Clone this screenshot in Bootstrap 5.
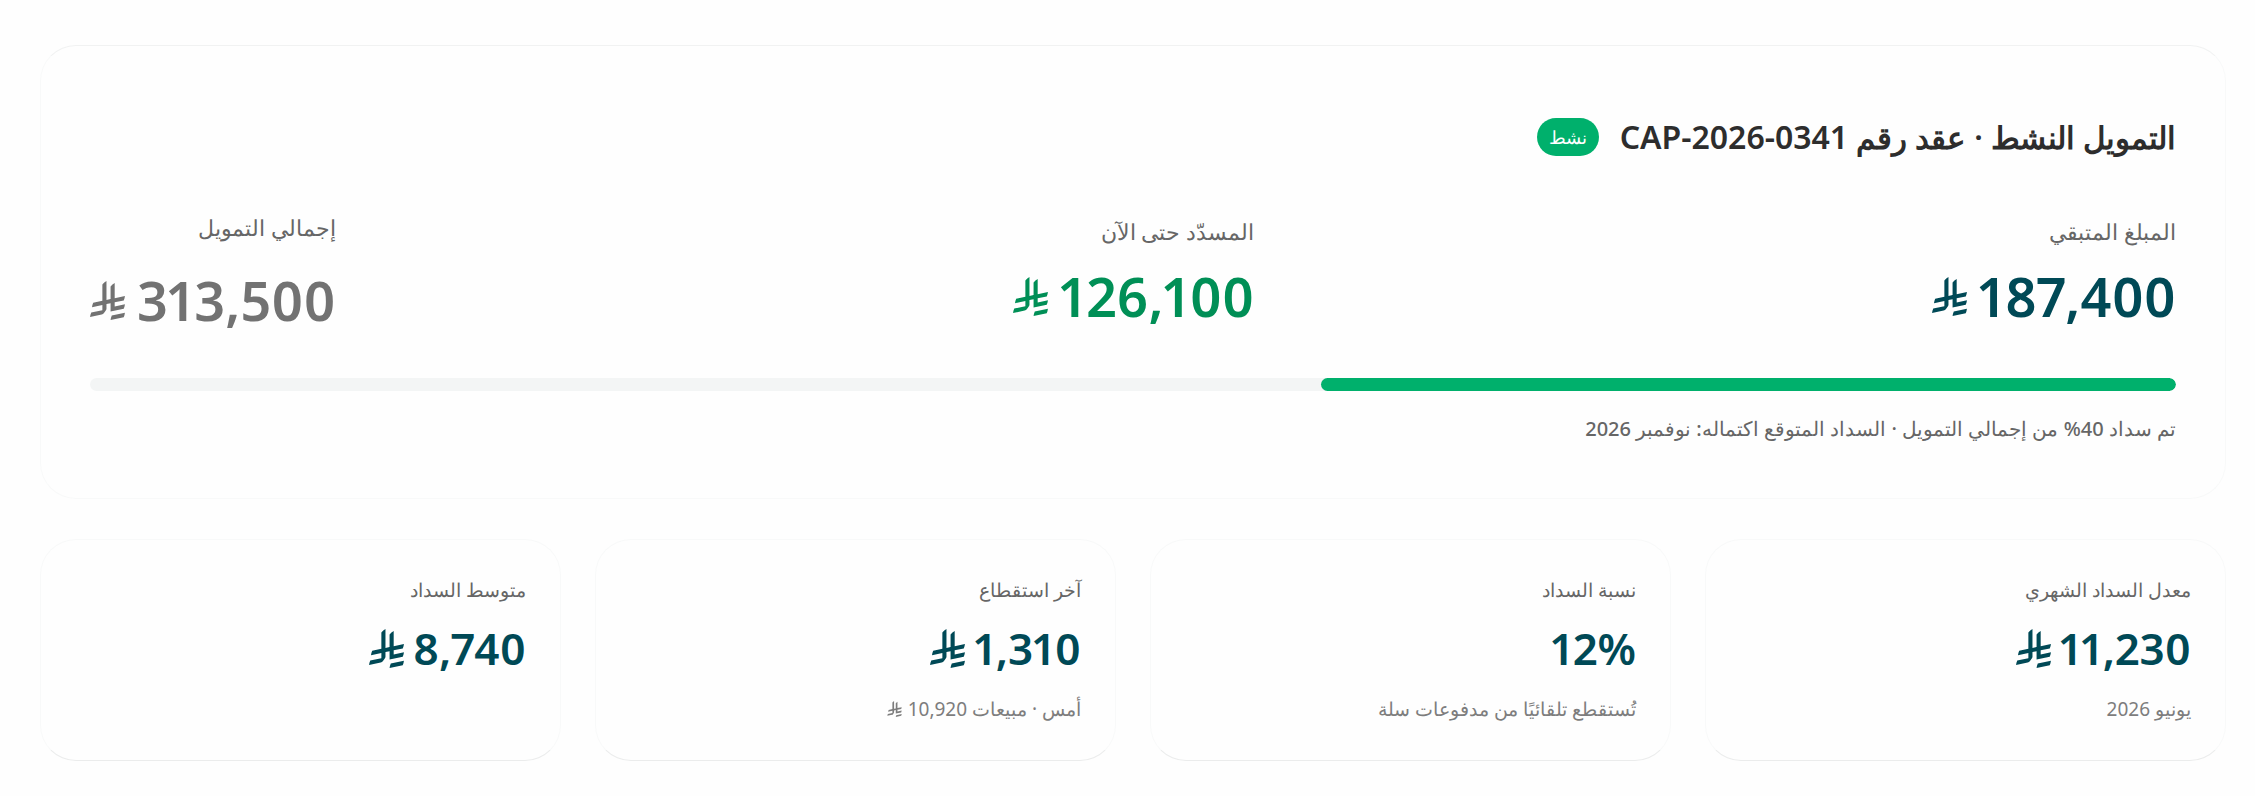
<!DOCTYPE html>
<html lang="ar" dir="rtl">
<head>
<meta charset="utf-8">
<meta name="viewport" content="width=device-width, initial-scale=1">
<title>التمويل النشط</title>
<link href="https://cdn.jsdelivr.net/npm/bootstrap@5.3.0/dist/css/bootstrap.min.css" rel="stylesheet">
<style>
  body { background: #fefefe; color: #2d2d2d; font-family: "Noto Sans", "Open Sans", sans-serif; }
  .page { padding: 45px 29px 30px 40px; }
  .panel { background: #fefefe; border: 1px solid #f8f9f9; border-radius: 36px; }
  .contract { border-top-color: #f1f2f2; padding: 67px 49px 53px; margin-bottom: 40px; }
  .contract-title { color: #2d2d2d; font-size: 31px; line-height: 48px; font-weight: 600; }
  .contract-no { font-size: 32px; }
  .heading-row { gap: 21px; margin-bottom: 50px; }
  .status { background: #00b06c; font-size: 18px; line-height: 26px; padding: 6px 12px; border-radius: 19px; font-weight: 400; }
  .stat-label { color: #666; font-size: 22px; line-height: 32px; margin-bottom: 21px; }
  .stat-total .stat-label { margin-bottom: 29px; }
  .amount { gap: 12px; font-size: 54px; line-height: 56px; font-weight: 600; font-variant-numeric: proportional-nums; }
  .riyal { width: 35px; height: 39px; fill: currentColor; flex: none; }
  .c-teal { color: #004956; }
  .c-green { color: #008f56; }
  .c-gray { color: #727272; }
  .paid-track { height: 13px; border-radius: 7px; background: #f3f5f5; margin-top: 50px; }
  .paid-track .progress-bar { background: #00b06c; border-radius: 7px; }
  .note { color: #666; font-size: 20px; line-height: 32px; margin-top: 22px; font-weight: 500; }
  .tiles { --bs-gutter-x: 34px; --bs-gutter-y: 34px; }
  .tile { border-bottom-color: #ebecec; padding: 36px 34px 37px; }
  .tile-label { color: #666; font-size: 19px; line-height: 28px; margin-bottom: 20px; }
  .tile .amount { font-size: 44px; line-height: 48px; gap: 9px; }
  .tile-sub { color: #7d7d7d; font-size: 19px; line-height: 28px; margin-top: 23px; gap: 6px; }
  .tile-sub .riyal { width: 15px; height: 16px; }
</style>
</head>
<body>
<svg class="d-none" aria-hidden="true">
  <symbol id="riyal" viewBox="0 0 1124.14 1256.39">
    <path d="M699.62,1113.02h0c-20.06,44.48-33.32,92.75-38.4,143.37l424.51-90.24c20.06-44.47,33.31-92.75,38.4-143.37l-424.51,90.24Z"/>
    <path d="M1085.73,895.8c20.06-44.47,33.32-92.75,38.4-143.37l-330.68,70.33v-135.2l292.27-62.11c20.06-44.47,33.32-92.75,38.4-143.37l-330.68,70.27V66.13c-50.67,28.45-95.67,66.32-132.25,110.99v403.35l-132.25,28.11V0c-50.67,28.44-95.67,66.32-132.25,110.99v525.69l-295.91,62.88c-20.06,44.47-33.33,92.75-38.42,143.37l334.33-71.05v170.26l-358.3,76.14c-20.06,44.47-33.32,92.75-38.4,143.37l375.04-79.7c30.53-6.35,56.77-24.4,73.83-49.24l68.78-101.97v-.02c7.14-10.55,11.3-23.27,11.3-36.97v-149.98l132.25-28.11v270.4l424.53-90.28Z"/>
  </symbol>
</svg>
<main class="page">
  <section class="panel contract">
    <div class="heading-row d-flex flex-wrap align-items-center">
      <h1 class="contract-title mb-0">التمويل النشط · عقد رقم <bdi class="contract-no" dir="ltr">CAP-2026-0341</bdi></h1>
      <span class="badge status">نشط</span>
    </div>
    <div class="d-flex flex-wrap justify-content-between align-items-center">
      <div>
        <div class="stat-label">المبلغ المتبقي</div>
        <div class="amount c-teal d-flex align-items-center"><span>187,400</span><svg class="riyal"><use href="#riyal"/></svg></div>
      </div>
      <div>
        <div class="stat-label">المسدّد حتى الآن</div>
        <div class="amount c-green d-flex align-items-center"><span>126,100</span><svg class="riyal"><use href="#riyal"/></svg></div>
      </div>
      <div class="stat-total">
        <div class="stat-label">إجمالي التمويل</div>
        <div class="amount c-gray d-flex align-items-center"><span>313,500</span><svg class="riyal"><use href="#riyal"/></svg></div>
      </div>
    </div>
    <div class="progress paid-track" role="progressbar" aria-valuenow="40" aria-valuemin="0" aria-valuemax="100">
      <div class="progress-bar" style="width:41%"></div>
    </div>
    <p class="note mb-0">تم سداد 40% من إجمالي التمويل · السداد المتوقع اكتماله: نوفمبر 2026</p>
  </section>
  <section class="row row-cols-1 row-cols-md-2 row-cols-xl-4 tiles mt-0">
    <div class="col mt-0"><div class="panel tile h-100">
      <div class="tile-label">معدل السداد الشهري</div>
      <div class="amount c-teal d-flex align-items-center"><span>11,230</span><svg class="riyal"><use href="#riyal"/></svg></div>
      <div class="tile-sub">يونيو 2026</div>
    </div></div>
    <div class="col mt-0"><div class="panel tile h-100">
      <div class="tile-label">نسبة السداد</div>
      <div class="amount c-teal d-flex align-items-center"><span dir="ltr">12%</span></div>
      <div class="tile-sub">تُستقطع تلقائيًا من مدفوعات سلة</div>
    </div></div>
    <div class="col mt-0"><div class="panel tile h-100">
      <div class="tile-label">آخر استقطاع</div>
      <div class="amount c-teal d-flex align-items-center"><span>1,310</span><svg class="riyal"><use href="#riyal"/></svg></div>
      <div class="tile-sub d-flex align-items-center"><span>أمس · مبيعات 10,920</span><svg class="riyal"><use href="#riyal"/></svg></div>
    </div></div>
    <div class="col mt-0"><div class="panel tile h-100">
      <div class="tile-label">متوسط السداد</div>
      <div class="amount c-teal d-flex align-items-center"><span>8,740</span><svg class="riyal"><use href="#riyal"/></svg></div>
    </div></div>
  </section>
</main>
<script src="https://cdn.jsdelivr.net/npm/bootstrap@5.3.0/dist/js/bootstrap.bundle.min.js"></script>
</body>
</html>
